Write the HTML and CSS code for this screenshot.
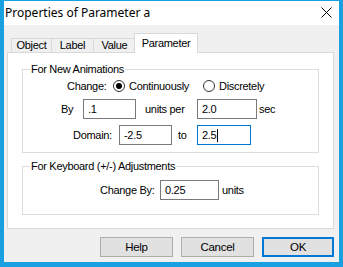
FILE: index.html
```html
<!DOCTYPE html>
<html>
<head>
<meta charset="utf-8">
<link rel="stylesheet" href="styles.css">
</head>
<body>
<div class="window">
  <div class="titlebar">
    <span class="title">Properties of Parameter a</span>
    <svg class="close" width="11" height="11" viewBox="0 0 11 11"><path d="M0.5 0.5L10.5 10.5M10.5 0.5L0.5 10.5" stroke="#000" stroke-width="1" fill="none"/></svg>
  </div>
  <div class="dialog">
    <div class="tabs">
      <div class="tab tab-object">Object</div>
      <div class="tab tab-label">Label</div>
      <div class="tab tab-value">Value</div>
      <div class="tab tab-active">Parameter</div>
    </div>
    <div class="panel">
      <fieldset class="group group-anim">
        <legend>For New Animations</legend>
        <div class="row row-change">
          <span class="lbl lbl-change">Change:</span>
          <span class="radio radio-on"></span>
          <span class="opt opt-cont">Continuously</span>
          <span class="radio"></span>
          <span class="opt">Discretely</span>
        </div>
        <div class="row row-by">
          <span class="lbl lbl-by">By</span>
          <span class="field field-by">.1</span>
          <span class="lbl lbl-per">units per</span>
          <span class="field field-sec">2.0</span>
          <span class="lbl lbl-sec">sec</span>
        </div>
        <div class="row row-domain">
          <span class="lbl lbl-domain">Domain:</span>
          <span class="field field-from">-2.5</span>
          <span class="lbl lbl-to">to</span>
          <span class="field field-to field-focus">2.5<span class="caret"></span></span>
        </div>
      </fieldset>
      <fieldset class="group group-keys">
        <legend>For Keyboard (+/-) Adjustments</legend>
        <div class="row row-step">
          <span class="lbl lbl-step">Change By:</span>
          <span class="field field-step">0.25</span>
          <span class="lbl lbl-units">units</span>
        </div>
      </fieldset>
    </div>
    <div class="buttons">
      <div class="btn btn-help">Help</div>
      <div class="btn btn-cancel">Cancel</div>
      <div class="btn btn-ok">OK</div>
    </div>
  </div>
</div>
</body>
</html>
```

FILE: styles.css
```css
* { box-sizing: border-box; }
html, body { margin: 0; padding: 0; }
body {
  width: 343px;
  height: 267px;
  overflow: hidden;
  font-family: "Liberation Sans", Arial, sans-serif;
  font-size: 11px;
  letter-spacing: -0.3px;
  color: #000;
}
.window {
  width: 343px;
  height: 267px;
  border-style: solid;
  border-color: #18a0e0;
  border-width: 1px 4px 5px 4px;
  display: flex;
  flex-direction: column;
  background: #f0f0f0;
}
.titlebar {
  height: 24px;
  flex: none;
  background: #fff;
  display: flex;
  align-items: center;
  padding: 0 7px 0 1px;
}
.title {
  font-family: "Noto Sans", "Liberation Sans", sans-serif;
  font-size: 12px;
  letter-spacing: 0;
  flex: 1;
  padding-bottom: 2px;
}
.close { display: block; margin-top: -2px; }
.dialog {
  flex: 1;
  display: flex;
  flex-direction: column;
  padding: 8px 5px 5px 3px;
}
.tabs {
  display: flex;
  align-items: flex-end;
  height: 19px;
  margin-left: 4px;
  position: relative;
  z-index: 1;
}
.tab {
  height: 14px;
  line-height: 13px;
  border: 1px solid #d9d9d9;
  border-bottom: none;
  background: #f0f0f0;
  text-align: center;
  margin-right: -1px;
}
.tab-object { width: 41px; }
.tab-label { width: 43px; }
.tab-value { width: 43px; margin-right: -2px; }
.tab-active {
  width: 64px;
  height: 20px;
  margin-bottom: -1px;
  padding-top: 2px;
  line-height: 14px;
  background: #fff;
}
.panel {
  height: 177px;
  flex: none;
  background: #fff;
  border: 1px solid #d9d9d9;
  padding: 9px 0 0 0;
}
.group {
  margin: 0 14px;
  padding: 0 0 7px 0;
  border: 1px solid #dcdcdc;
  min-width: 0;
}
.group legend {
  padding: 0 1px;
  margin-left: 7px;
  line-height: 14px;
  height: 14px;
}
.group-keys { margin-top: 6px; padding-bottom: 14px; }
.row {
  display: flex;
  align-items: center;
  height: 20px;
}
.row-change { padding-left: 44px; }
.row-by { padding-left: 38px; margin-top: 3px; }
.row-domain { padding-left: 50px; margin-top: 6px; }
.row-step { padding-left: 77px; margin-top: 7px; }
.lbl-change { width: 46px; }
.lbl-by { width: 22px; }
.lbl-per { width: 52px; margin-left: 9px; }
.lbl-sec { margin-left: 2px; }
.lbl-domain { width: 46px; }
.lbl-to { width: 19px; margin-left: 6px; }
.lbl-step { width: 60px; }
.lbl-units { margin-left: 3px; }
.radio {
  width: 12px;
  height: 12px;
  border: 1px solid #333;
  border-radius: 50%;
  background: #fff;
  display: flex;
  align-items: center;
  justify-content: center;
  flex: none;
}
.radio-on::after {
  content: "";
  width: 6px;
  height: 6px;
  border-radius: 50%;
  background: #000;
}
.opt { margin-left: 4px; }
.opt-cont { width: 74px; }
.field {
  height: 20px;
  border: 1px solid #7a7a7a;
  background: #fff;
  padding-left: 4px;
  line-height: 18px;
  display: flex;
  align-items: center;
  flex: none;
}
.field-by { width: 53px; }
.field-sec { width: 60px; }
.field-from { width: 53px; }
.field-to { width: 54px; }
.field-step { width: 59px; }
.field-focus { border-color: #0078d7; }
.caret {
  width: 1px;
  height: 13px;
  background: #000;
  margin-left: 1px;
}
.buttons {
  display: flex;
  justify-content: flex-end;
  gap: 8px;
  margin-top: 8px;
}
.btn {
  width: 73px;
  height: 20px;
  border: 1px solid #adadad;
  background: #e1e1e1;
  text-align: center;
  line-height: 18px;
  font-size: 11.5px;
}
.btn-ok {
  width: 72px;
  border-color: #0078d7;
  box-shadow: inset 0 0 0 1px #0078d7;
}
```
